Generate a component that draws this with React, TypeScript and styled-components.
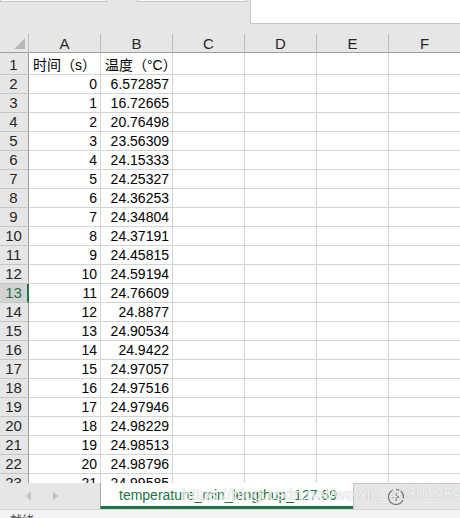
import React from "react";
import styled, { createGlobalStyle } from "styled-components";

const Global = createGlobalStyle`
  html, body { margin: 0; padding: 0; background: #e6e6e6; }
  body { font-family: "Liberation Sans", "Noto Sans CJK SC", sans-serif; }
`;

const Page = styled.div`
  position: relative;
  width: 460px;
  height: 518px;
  overflow: hidden;
  display: flex;
  flex-direction: column;
  background: #e6e6e6;
`;

const TopBar = styled.div`
  height: 34px;
  flex: none;
  display: flex;
  align-items: flex-start;
`;

const TopBox = styled.div<{ $w: number; $ml: number }>`
  width: ${(p) => p.$w}px;
  margin-left: ${(p) => p.$ml}px;
  height: 1px;
  background: #fafafa;
  border: 1px solid #c6c6c6;
  border-top: none;
`;

const TopPanel = styled.div`
  margin-left: 3px;
  flex: 1;
  height: 23px;
  background: #ffffff;
  border-left: 1px solid #c6c6c6;
  border-bottom: 1px solid #c6c6c6;
`;

const Grid = styled.div`
  height: 449px;
  flex: none;
  overflow: hidden;
  background: #ffffff;
`;

const Row = styled.div<{ $h: number }>`
  display: grid;
  grid-template-columns: 29px repeat(6, 72px);
  height: ${(p) => p.$h}px;
`;

const Corner = styled.div`
  position: relative;
  background: #e6e6e6;
  border-right: 1px solid #bdbdbd;
  border-bottom: 1px solid #9e9e9e;
  &::after {
    content: "";
    position: absolute;
    right: 3px;
    bottom: 3px;
    width: 0;
    height: 0;
    border-left: 11px solid transparent;
    border-bottom: 11px solid #b8b8b8;
  }
`;

const ColHead = styled.div`
  background: #e6e6e6;
  border-right: 1px solid #bdbdbd;
  border-bottom: 1px solid #9e9e9e;
  display: flex;
  align-items: center;
  justify-content: center;
  font-size: 15px;
  color: #262626;
  padding-top: 1px;
`;

const RowHead = styled.div<{ $active?: boolean }>`
  background: ${(p) => (p.$active ? "#d2d2d2" : "#e6e6e6")};
  border-bottom: 1px solid #c6c6c6;
  border-right: ${(p) => (p.$active ? "2px solid #217346" : "1px solid #9e9e9e")};
  color: ${(p) => (p.$active ? "#217346" : "#262626")};
  display: flex;
  align-items: flex-end;
  justify-content: center;
  font-size: 15px;
  line-height: 18px;
  padding-bottom: 0px;
  padding-right: ${(p) => (p.$active ? "0px" : "1px")};
`;

const Cell = styled.div<{ $align?: "left" | "right" }>`
  border-right: 1px solid #d4d4d4;
  border-bottom: 1px solid #d4d4d4;
  display: flex;
  align-items: flex-end;
  justify-content: ${(p) => (p.$align === "left" ? "flex-start" : "flex-end")};
  padding: 0 3px 0 4px;
  font-size: 14px;
  line-height: 18px;
  color: #000;
  white-space: nowrap;
  overflow: visible;
`;

const TabBar = styled.div`
  height: 26px;
  flex: none;
  display: flex;
  background: #e6e6e6;
`;

const NavArea = styled.div`
  width: 100px;
  display: flex;
  align-items: center;
  padding-left: 26px;
  gap: 22px;
  box-sizing: border-box;
`;

const Arrow = styled.div<{ $dir: "l" | "r" }>`
  width: 0;
  height: 0;
  border-top: 5px solid transparent;
  border-bottom: 5px solid transparent;
  ${(p) => (p.$dir === "l" ? "border-right: 5px solid #c3c3c3;" : "border-left: 5px solid #c3c3c3;")}
`;

const ActiveTab = styled.div`
  width: 253px;
  box-sizing: border-box;
  background: #ffffff;
  border-left: 1px solid #a8a8a8;
  border-bottom: 3px solid #217346;
  color: #217346;
  font-size: 14px;
  display: flex;
  align-items: center;
  padding-left: 18px;
  padding-top: 1px;
`;

const AddArea = styled.div`
  flex: 1;
  border-top: 1px solid #c6c6c6;
  border-left: 1px solid #c6c6c6;
  background: #e6e6e6;
  display: flex;
  align-items: center;
  padding-left: 33px;
`;

const StatusBar = styled.div`
  flex: 1;
  background: #f3f3f3;
  border-top: 1px solid #d8d8d8;
  padding-left: 10px;
  font-size: 12px;
  color: #444;
  line-height: 12px;
  padding-top: 5px;
  overflow: hidden;
`;

const Watermark = styled.div`
  position: absolute;
  left: 182px;
  top: 486px;
  font-size: 16px;
  color: rgba(255, 255, 255, 0.85);
  text-shadow: 0 0 1px rgba(120, 120, 120, 0.55);
  font-family: "Liberation Sans", sans-serif;
  letter-spacing: 0.2px;
  pointer-events: none;
`;

const data: [string, string][] = [
  ["0", "6.572857"],
  ["1", "16.72665"],
  ["2", "20.76498"],
  ["3", "23.56309"],
  ["4", "24.15333"],
  ["5", "24.25327"],
  ["6", "24.36253"],
  ["7", "24.34804"],
  ["8", "24.37191"],
  ["9", "24.45815"],
  ["10", "24.59194"],
  ["11", "24.76609"],
  ["12", "24.8877"],
  ["13", "24.90534"],
  ["14", "24.9422"],
  ["15", "24.97057"],
  ["16", "24.97516"],
  ["17", "24.97946"],
  ["18", "24.98229"],
  ["19", "24.98513"],
  ["20", "24.98796"],
  ["21", "24.99585"],
];

const cols = ["A", "B", "C", "D", "E", "F"];

export default function App() {
  return (
    <Page>
      <Global />
      <TopBar>
        <TopBox $w={105} $ml={0} />
        <TopBox $w={108} $ml={30} />
        <TopPanel />
      </TopBar>
      <Grid>
        <Row $h={19}>
          <Corner />
          {cols.map((c) => (
            <ColHead key={c}>{c}</ColHead>
          ))}
        </Row>
        <Row $h={22}>
          <RowHead>1</RowHead>
          <Cell $align="left">时间（s）</Cell>
          <Cell $align="left">温度（°C）</Cell>
          <Cell />
          <Cell />
          <Cell />
          <Cell />
        </Row>
        {data.map(([a, b], i) => (
          <Row $h={19} key={i}>
            <RowHead $active={i + 2 === 13}>{i + 2}</RowHead>
            <Cell>{a}</Cell>
            <Cell>{b}</Cell>
            <Cell />
            <Cell />
            <Cell />
            <Cell />
          </Row>
        ))}
      </Grid>
      <TabBar>
        <NavArea>
          <Arrow $dir="l" />
          <Arrow $dir="r" />
        </NavArea>
        <ActiveTab>temperature_min_lengthup_127.69</ActiveTab>
        <AddArea>
          <svg width="18" height="18" viewBox="0 0 18 18">
            <circle cx="9" cy="9" r="7.5" fill="none" stroke="#6b6b6b" strokeWidth="1.2" />
            <path d="M9 5v8M5 9h8" stroke="#6b6b6b" strokeWidth="1.3" />
          </svg>
        </AddArea>
      </TabBar>
      <StatusBar>就绪</StatusBar>
      <Watermark>https://blog.csdn.net/weixin_40301259</Watermark>
    </Page>
  );
}
